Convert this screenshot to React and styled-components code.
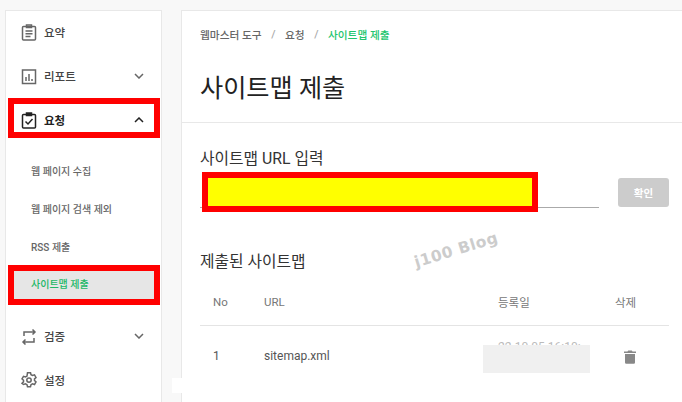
import React from 'react';
import styled, { createGlobalStyle } from 'styled-components';

const Global = createGlobalStyle`
  html, body { margin: 0; padding: 0; }
  body { background: #f8f8f8; width: 682px; height: 402px; overflow: hidden;
    font-family: Roboto, "Noto Sans CJK KR", sans-serif; }
`;
const Page = styled.div`
  position: relative; width: 682px; height: 402px; overflow: hidden;
  display: flex; gap: 19px; padding: 10px 0 0 5px; box-sizing: border-box;
`;
const Sidebar = styled.nav`
  width: 157px; flex: none; height: 420px; box-sizing: border-box;
  background: #fff; border: 1px solid #e8e8e8; padding-top: 0;
`;
const MenuRow = styled.div`
  height: 44px; display: flex; align-items: center; padding: 0 16px 0 15px;
  color: ${p => (p.$active ? '#222' : '#444')};
  font-size: 11.5px; font-weight: ${p => (p.$active ? 700 : 500)};
  &:first-child { margin-top: -1px; }
`;
const MenuIcon = styled.svg`
  width: 16px; height: 17px; flex: none; margin-right: 7px;
  fill: none; stroke: ${p => (p.$active ? '#222' : '#666')}; stroke-width: 1.5;
`;
const MenuLabel = styled.span`flex: 1;`;
const Chevron = styled.svg`
  width: 10px; height: 6px; fill: none; stroke: ${p => (p.$active ? '#222' : '#666')}; stroke-width: 1.5; margin-right: 1px;
`;
const SubMenu = styled.div`
  padding: 9px 0 11px;
`;
const SubRow = styled.div`
  height: 38px; display: flex; align-items: center; padding-left: 25px;
  font-size: 10px; font-weight: 500;
  color: #666;
`;
const Main = styled.main`
  flex: 1; height: 420px; background: #fff; border: 1px solid #e8e8e8; border-right: none; box-sizing: border-box;
`;
const Header = styled.header`
  height: 112px; box-sizing: border-box; border-bottom: 1px solid #e8e8e8; padding: 16px 0 0 18px;
`;
const Crumbs = styled.div`
  display: flex; align-items: center; font-size: 10.7px; font-weight: 500; color: #666; height: 14px;
`;
const CrumbSep = styled.span`margin: 0 9.500px; color: #aaa; font-size: 11px;`;
const CrumbActive = styled.span`color: #22c56e;`;
const Title = styled.h1`
  margin: 30px 0 0; font-size: 25.2px; line-height: 36px; font-weight: 400; color: #222;
`;
const Section = styled.section`padding: 25px 13px 0 18px;`;
const SectionTitle = styled.h2`
  margin: 0; font-size: 15.8px; line-height: 22px; font-weight: 400; color: #333;
`;
const InputRow = styled.div`
  display: flex; align-items: flex-end; margin-top: 6px; height: 32px;
`;
const InputLine = styled.div`width: 399px; height: 14px; border-bottom: 1px solid #aaa; margin-right: 19px; box-sizing: border-box;`;
const Confirm = styled.button`
  width: 51px; height: 29px; border: 0; border-radius: 3px; background: #ccc; color: #fff;
  font: 700 10.5px Roboto, "Noto Sans CJK KR", sans-serif; padding: 0; margin-bottom: 1px;
`;
const ListTitle = styled(SectionTitle)`margin-top: 43px;`;
const Table = styled.div`margin-top: 7px;`;
const Row = styled.div`
  display: grid; grid-template-columns: 51px 234px 117px 1fr; align-items: center; padding-left: 13px;
  height: ${p => (p.$head ? '44px' : '60px')};
  font-size: ${p => (p.$head ? '11.5px' : '12px')};
  color: ${p => (p.$head ? '#777' : '#555')};
  border-bottom: ${p => (p.$head ? '1px solid #e4e4e4' : 'none')};
  &:first-child { padding-bottom: 1px; }
`;
const DateCell = styled.span`color: #bbb; font-size: 12px; white-space: nowrap; position: relative; top: -9px;`;
const TrashWrap = styled.span`display: flex; padding-left: 8px; color: #888;`;
const Mark = styled.div`
  position: absolute; box-sizing: border-box; left: ${p => p.$x}px; top: ${p => p.$y}px; width: ${p => p.$w}px; height: ${p => p.$h}px;
  border: 6px solid #f00; background: ${p => p.$fill || 'transparent'};
`;
const ActiveLabel = styled.span`
  position: absolute; left: 31px; top: 277px; font-size: 10px; font-weight: 500; color: #22b866; line-height: 16px;
`;
const Watermark = styled.div`
  position: absolute; left: 413px; top: 241px; font: 700 15.5px "DejaVu Sans", sans-serif; color: #ccc;
  transform: rotate(-17deg); letter-spacing: .5px; white-space: nowrap;
`;
const Blur = styled.div`position: absolute; left: 483px; top: 345px; width: 107px; height: 28px; background: #f0f0f0;`;
const Patch = styled.div`position: absolute; left: 172px; top: 378px; width: 12px; height: 15px; background: #fff;`;

const icons = {
  summary: <><rect x="1.5" y="2.5" width="13" height="13.5" rx="1" /><rect x="5.5" y="1" width="5" height="2.5" /><path d="M4.5 7h7M4.5 9.7h7M4.5 12.4h5" /></>,
  report: <><rect x="1.5" y="2" width="13" height="13.5" /><path d="M5 13V9M8 13V6M11 13v-2" /></>,
  request: <><rect x="1.5" y="2.5" width="13" height="13.5" rx="1" /><rect x="5.5" y="1" width="5" height="2.5" fill="#222" /><path d="M4.5 9.5l2.5 2.5 4.5-5" /></>,
  verify: <path d="M3 8V4h11M11.5 1.5L14 4l-2.5 2.5M13 10v4H2M4.500 11.500L2 14l2.500 2.500" />,
  settings: <><path d="M6.500 1.500h3l.5 2 1.500.800 2-.600 1.500 2.600-1.500 1.400v1.600l1.500 1.400-1.500 2.600-2-.600-1.500.800-.5 2h-3l-.5-2-1.500-.800-2 .600L1 12.100l1.500-1.400V9.100L1 7.700l1.500-2.600 2 .600L6 4.900z" transform="translate(0 -.8)" /><circle cx="8" cy="8.100" r="2.200" /></>,
};

function Menu({ icon, label, chevron, active }) {
  return (
    <MenuRow $active={active}>
      <MenuIcon viewBox="0 0 16 17" $active={active}>{icons[icon]}</MenuIcon>
      <MenuLabel>{label}</MenuLabel>
      {chevron && (
        <Chevron viewBox="0 0 10 6" $active={active}>
          <path d={chevron === 'up' ? 'M1 5l4-4 4 4' : 'M1 1l4 4 4-4'} />
        </Chevron>
      )}
    </MenuRow>
  );
}

export default function App() {
  return (
    <Page>
      <Global />
      <Sidebar>
        <Menu icon="summary" label="요약" />
        <Menu icon="report" label="리포트" chevron="down" />
        <Menu icon="request" label="요청" chevron="up" active />
        <SubMenu>
          <SubRow>웹 페이지 수집</SubRow>
          <SubRow>웹 페이지 검색 제외</SubRow>
          <SubRow>RSS 제출</SubRow>
          <SubRow />
        </SubMenu>
        <Menu icon="verify" label="검증" chevron="down" />
        <Menu icon="settings" label="설정" />
      </Sidebar>
      <Main>
        <Header>
          <Crumbs>
            웹마스터 도구<CrumbSep>/</CrumbSep>요청<CrumbSep>/</CrumbSep>
            <CrumbActive>사이트맵 제출</CrumbActive>
          </Crumbs>
          <Title>사이트맵 제출</Title>
        </Header>
        <Section>
          <SectionTitle>사이트맵 URL 입력</SectionTitle>
          <InputRow>
            <InputLine />
            <Confirm>확인</Confirm>
          </InputRow>
          <ListTitle>제출된 사이트맵</ListTitle>
          <Table>
            <Row $head>
              <span>No</span><span>URL</span><span>등록일</span><span>삭제</span>
            </Row>
            <Row>
              <span>1</span><span>sitemap.xml</span><DateCell>22.10.05 16:10:</DateCell>
              <TrashWrap>
                <svg width="14" height="15" viewBox="0 0 14 15" fill="currentColor">
                  <path d="M1 2.500h3.500L5.200 1.500h3.600l.7 1H13V4H1zM2 5h10v8.500a1.200 1.200 0 0 1-1.200 1.200H3.200A1.200 1.200 0 0 1 2 13.500z" />
                </svg>
              </TrashWrap>
            </Row>
          </Table>
        </Section>
      </Main>
      <Mark $x={8} $y={98} $w={152} $h={40} />
      <Mark $x={8} $y={265} $w={152} $h={40} $fill="#e6e6e6" />
      <ActiveLabel>사이트맵 제출</ActiveLabel>
      <Mark $x={202} $y={172} $w={336} $h={40} $fill="#ff0" />
      <Watermark>j100 Blog</Watermark>
      <Blur />
      <Patch />
    </Page>
  );
}
